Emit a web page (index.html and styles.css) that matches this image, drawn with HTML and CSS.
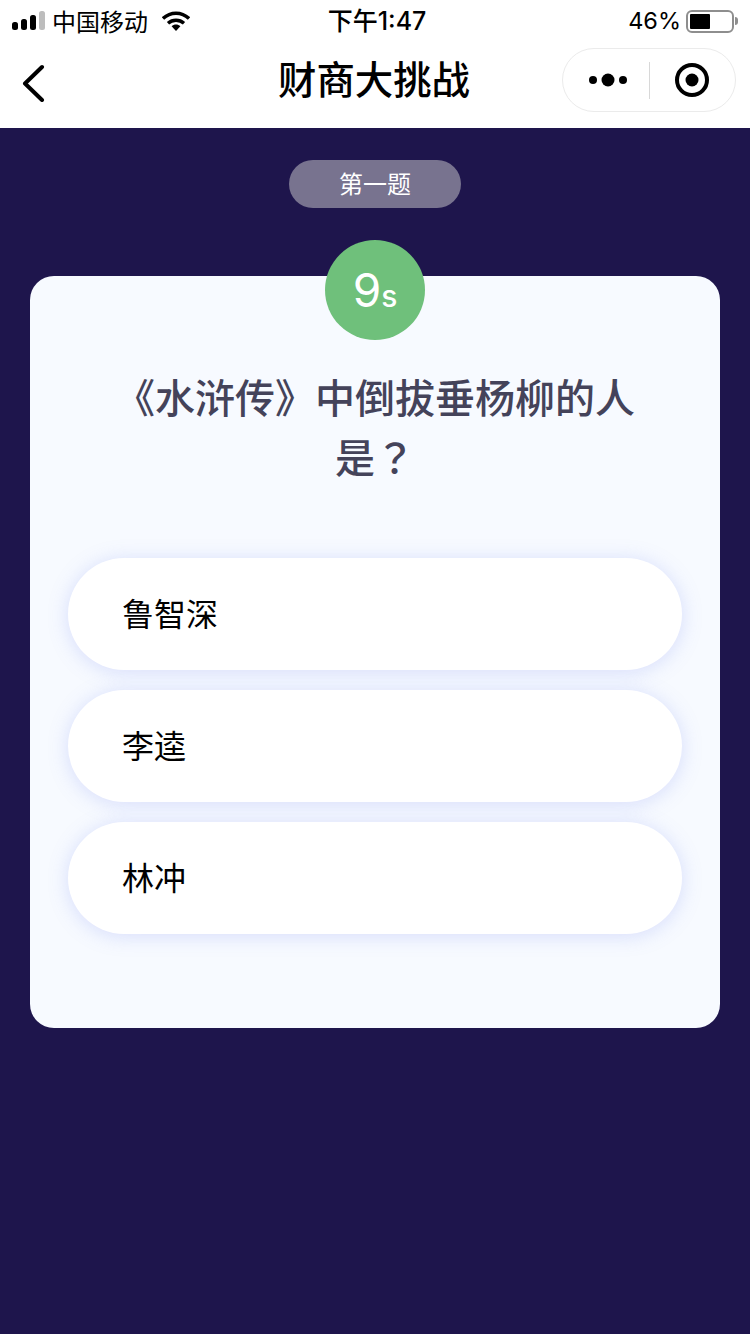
FILE: index.html
```html
<!DOCTYPE html>
<html lang="zh-CN">
<head>
    <meta charset="UTF-8">
    <meta name="viewport" content="width=device-width, initial-scale=1.0">
    <title>财商大挑战</title>
    <link rel="stylesheet" href="styles.css">
</head>
<body>
    <div class="status-bar">
        <div class="status-left">
            <svg class="signal" width="34" height="20" viewBox="0 0 34 20">
                <rect x="0" y="11" width="6" height="8" rx="2.5" fill="#000"/>
                <rect x="9" y="8" width="6" height="11" rx="2.5" fill="#000"/>
                <rect x="18" y="4" width="6" height="15" rx="2.5" fill="#000"/>
                <rect x="27" y="0" width="6" height="19" rx="2.5" fill="#bdbdbd"/>
            </svg>
            <span class="carrier">中国移动</span>
            <svg class="wifi" width="28" height="20" viewBox="0 0 28 20">
                <path d="M1 7.5C8.5 0.5 19.5 0.5 27 7.5" fill="none" stroke="#000" stroke-width="3.4"/>
                <path d="M6 12.2C10.5 8.2 17.5 8.2 22 12.2" fill="none" stroke="#000" stroke-width="3.4"/>
                <path d="M9.6 15.2C12 13 16 13 18.4 15.2L14 20Z" fill="#000"/>
            </svg>
        </div>
        <div class="status-time">下午1:47</div>
        <div class="status-right">
            <span class="battery-pct">46%</span>
            <div class="battery"><div class="battery-level"></div></div>
            <div class="battery-cap"></div>
        </div>
    </div>

    <div class="nav-bar">
        <svg class="nav-back" width="24" height="38" viewBox="0 0 24 38">
            <path d="M21 3L4 19.500L21 36" fill="none" stroke="#000" stroke-width="4" stroke-linecap="round" stroke-linejoin="round"/>
        </svg>
        <div class="nav-title">财商大挑战</div>
        <div class="capsule">
            <svg class="capsule-dots" width="38" height="14" viewBox="0 0 38 14">
                <circle cx="4" cy="7" r="4" fill="#000"/>
                <circle cx="19" cy="7" r="6.500" fill="#000"/>
                <circle cx="34" cy="7" r="4" fill="#000"/>
            </svg>
            <div class="capsule-line"></div>
            <svg class="capsule-target" width="36" height="36" viewBox="0 0 36 36">
                <circle cx="18" cy="18" r="15" fill="none" stroke="#000" stroke-width="4"/>
                <circle cx="18" cy="18" r="6.500" fill="#000"/>
            </svg>
        </div>
    </div>

    <div class="page">
        <div class="badge">第一题</div>
        <div class="card">
            <div class="timer">9<span class="timer-unit">s</span></div>
            <div class="question">《水浒传》中倒拔垂杨柳的人是<span class="question-mark" lang="zh-TW">？</span></div>
            <div class="options">
                <div class="option">鲁智深</div>
                <div class="option">李逵</div>
                <div class="option">林冲</div>
            </div>
        </div>
    </div>
</body>
</html>
```

FILE: styles.css
```css
* {
    margin: 0;
    padding: 0;
    box-sizing: border-box;
}

body {
    width: 750px;
    height: 1334px;
    overflow: hidden;
    font-family: "Noto Sans CJK SC", "Noto Sans", sans-serif;
    background: #1e154c;
    color: #000;
}

.status-bar {
    height: 40px;
    background: #fff;
    display: grid;
    grid-template-columns: 1fr auto 1fr;
    align-items: center;
    padding: 0 12px;
}

.status-left {
    display: flex;
    align-items: center;
}

.signal {
    margin-right: 6px;
}

.carrier {
    font-size: 24px;
    line-height: 36px;
    margin-right: 14px;
}

.status-time {
    font-family: "Inter", "Noto Sans CJK SC", sans-serif;
    font-size: 25px;
    font-weight: 500;
    line-height: 40px;
    margin-left: 4px;
}

.status-right {
    display: flex;
    align-items: center;
    justify-content: flex-end;
}

.battery-pct {
    font-family: "Inter", sans-serif;
    font-size: 23.5px;
    line-height: 42px;
    margin-right: 5px;
}

.battery {
    width: 48px;
    height: 23px;
    border: 2px solid #8e8e8e;
    border-radius: 6px;
    padding: 2px;
}

.battery-level {
    width: 20px;
    height: 100%;
    background: #000;
    border-radius: 1px;
}

.battery-cap {
    width: 3px;
    height: 8px;
    margin-left: 1px;
    background: #8e8e8e;
    border-radius: 0 3px 3px 0;
}

.nav-bar {
    position: relative;
    height: 88px;
    background: #fff;
    display: flex;
    align-items: center;
    justify-content: space-between;
    padding: 0 14px 0 21px;
}

.nav-title {
    position: absolute;
    left: 0;
    right: 2px;
    top: 9px;
    text-align: center;
    font-size: 38.4px;
    font-weight: 500;
    line-height: 56px;
}

.capsule {
    width: 174px;
    height: 64px;
    margin-top: -8px;
    border: 1px solid #ebebeb;
    border-radius: 32px;
    display: flex;
    align-items: center;
    background: #fff;
    position: relative;
    padding-left: 26px;
}

.capsule-line {
    width: 1px;
    height: 37px;
    background: #d8d8d8;
    margin-left: 22px;
}

.capsule-target {
    margin-left: 24px;
}

.nav-back {
    margin-top: -3px;
}

.page {
    display: flex;
    flex-direction: column;
    align-items: center;
    padding-top: 32px;
}

.badge {
    width: 172px;
    height: 48px;
    border-radius: 24px;
    background: #78738f;
    color: #fff;
    font-size: 24px;
    line-height: 46px;
    text-align: center;
}

.card {
    width: 690px;
    height: 752px;
    margin-top: 68px;
    background: #f7faff;
    border-radius: 24px;
    display: flex;
    flex-direction: column;
    align-items: center;
}

.timer {
    width: 100px;
    height: 100px;
    margin-top: -36px;
    border-radius: 50%;
    background: #6fc07b;
    color: #fff;
    font-family: "Inter", sans-serif;
    font-size: 46px;
    line-height: 100px;
    text-align: center;
}

.timer-unit {
    font-size: 30px;
    font-weight: 500;
}

.question {
    width: 530px;
    margin-top: 26px;
    color: #44435a;
    font-size: 40px;
    font-weight: 500;
    line-height: 60px;
    text-align: center;
}

/* TC font centres the full-width mark in its cell */
.question-mark {
    font-family: "Noto Sans CJK TC", sans-serif;
}

.options {
    width: 614px;
    margin-top: 72px;
    display: flex;
    flex-direction: column;
    gap: 20px;
}

.option {
    height: 112px;
    padding-left: 54px;
    background: #fff;
    border-radius: 56px;
    box-shadow: 0 2px 20px rgba(120, 140, 240, 0.26);
    font-size: 32px;
    line-height: 108px;
}
```
